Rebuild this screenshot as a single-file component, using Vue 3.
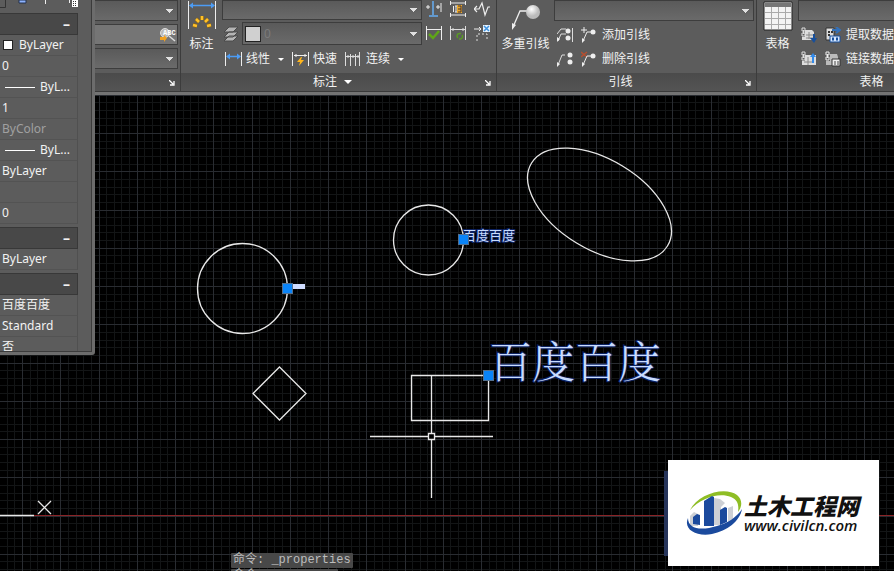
<script setup>
import { ref } from 'vue'

const properties = ref([
  { value: 'ByLayer', swatch: true },
  { value: '0' },
  { value: 'ByL...', line: true },
  { value: '1' },
  { value: 'ByColor', muted: true },
  { value: 'ByL...', line: true },
  { value: 'ByLayer' },
  { value: '' },
  { value: '0' }
])
const textProperties = ref(['百度百度', 'Standard', '否'])

// Grid spacing in screen pixels, five minor cells per major cell
const minor = 7.65
const count = 300
const columns = Array.from({ length: count }, (_, i) => ({
  at: Math.round(22 + (i - 5) * minor) + 0.5,
  major: i % 5 === 0
}))
const rows = Array.from({ length: count }, (_, i) => ({
  at: Math.round(38 + (i - 5) * minor) + 0.5,
  major: i % 5 === 0
}))

function gridPath(lines, major, vertical) {
  return lines
    .filter((l) => l.major === major)
    .map((l) => (vertical ? `M${l.at} 0V2000` : `M0 ${l.at}H2400`))
    .join('')
}
const minorPath = gridPath(columns, false, true) + gridPath(rows, false, false)
const majorPath = gridPath(columns, true, true) + gridPath(rows, true, false)
</script>

<template>
  <div class="cad">
    <header class="ribbon">
      <section class="group group-text">
        <div class="group-body stack">
          <select class="combo" aria-label="文字样式"></select>
          <div class="find">
            <input type="text" aria-label="查找文字" />
            <svg width="18" height="16" viewBox="0 0 18 16">
              <circle cx="6" cy="6" r="4.500" fill="#bbb" stroke="#ddd" />
              <path d="M10 9l6 5" stroke="#ddd" stroke-width="1.500" />
              <path d="M1 10h4v-2l3 3-3 4v-2H1z" fill="#f0a020" />
              <text x="4" y="8" class="abc">ABC</text>
            </svg>
          </div>
          <select class="combo" aria-label="文字高度"></select>
        </div>
        <footer class="title">
          <button class="launcher" aria-label="文字设置">
            <svg width="6" height="6" viewBox="0 0 6 6"><path d="M0 0l4 4M5 1v4H1" /></svg>
          </button>
        </footer>
      </section>

      <section class="group group-dim">
        <div class="group-body">
          <button class="big">
            <svg width="28" height="31" viewBox="0 0 28 31">
              <path d="M.5 1v28M27.500 1v28" stroke="#eee" />
              <path d="M3 5.500h22" stroke="#4c9cf5" stroke-width="1.500" />
              <path d="M1 5.500l4-3v6zM27 5.500l-4-3v6z" fill="#4c9cf5" />
              <path d="M5 25l4 1M8 19l3 3M14 16v4M20 19l-3 3M23 25l-4 1" stroke="#8b6414" stroke-width="4" />
              <path d="M5 25l4 1M8 19l3 3M14 16v4M20 19l-3 3M23 25l-4 1" stroke="#ffc12a" stroke-width="2.500" />
            </svg>
            <span>标注</span>
          </button>
          <div class="middle">
            <select class="combo" aria-label="标注样式"></select>
            <div class="layer">
              <svg width="16" height="16" viewBox="0 0 16 16">
                <path d="M6 10h9l-5 5H1zM6 6h9l-5 5H1zM6 1h9l-5 5H1z" fill="#b5b5b5" stroke="#4a4a4a" />
              </svg>
              <div class="layer-box">
                <i class="layer-swatch"></i>
                <select class="combo" aria-label="标注图层"><option>0</option></select>
              </div>
            </div>
            <div class="tools">
              <button>
                <svg width="17" height="16" viewBox="0 0 17 16">
                  <path d="M.5 1v14M16.500 1v14" stroke="#eee" />
                  <path d="M4 5.500h9" stroke="#4c9cf5" stroke-width="1.500" />
                  <path d="M1 5.500l4-3v6zM16 5.500l-4-3v6z" fill="#4c9cf5" />
                </svg>
                <span>线性</span><i class="caret small"></i>
              </button>
              <button>
                <svg width="17" height="16" viewBox="0 0 17 16">
                  <path d="M.5 1v14M16.500 1v14M2 4.500h13M4 3v3M13 3v3" stroke="#eee" />
                  <path d="M9 6l-4 5h3l-1 4 5-6H9l1-3z" fill="#ffb51c" />
                </svg>
                <span>快速</span>
              </button>
              <button>
                <svg width="17" height="16" viewBox="0 0 17 16">
                  <path d="M.5 1v14M14.500 1v14M5.500 3v12M10.500 3v12M1 5.500h14M3 4v3M8 4v3M13 4v3" stroke="#ddd" />
                </svg>
                <span>连续</span><i class="caret small"></i>
              </button>
            </div>
          </div>
          <div class="icon-grid">
            <button aria-label="打断">
              <svg width="16" height="16" viewBox="0 0 16 16">
                <path d="M0 6h4M10 6h4M15 2v9M2 4v4M12 4v4" stroke="#eee" fill="none" />
                <path d="M7 0v14M3 15h9" stroke="#65adf2" stroke-width="1.500" />
              </svg>
            </button>
            <button aria-label="检验">
              <svg width="16" height="16" viewBox="0 0 16 16">
                <path d="M.5 0v4M15.500 0v4M1 2h14M.5 12v4M15.500 12v4M1 14h14M3.500 5v6" stroke="#eee" />
                <path d="M7 4h5v8H7z" fill="#eea927" />
                <path d="M5 5h2M6 5v6M5 11h2" stroke="#eee" fill="none" />
                <path d="M8 5h3v6H8M8 8h3" stroke="#433" fill="none" />
              </svg>
            </button>
            <button aria-label="折弯标注">
              <svg width="16" height="16" viewBox="0 0 16 16">
                <path d="M0 8h5l3-6 3 12 3-8h2M3 5L0 8l3 3" stroke="#eee" stroke-width="1.200" fill="none" />
              </svg>
            </button>
            <button aria-label="更新">
              <svg width="16" height="16" viewBox="0 0 16 16">
                <path d="M.5 1v14M15.500 1v14M1 4.500h14" stroke="#eee" />
                <path d="M3 9l4 4 6-7" stroke="#5fa617" stroke-width="2.500" fill="none" />
              </svg>
            </button>
            <button aria-label="重新关联">
              <svg width="16" height="16" viewBox="0 0 16 16">
                <path d="M.5 1v14M15.500 1v14M1 4.500h14M3 3v3M13 3v3" stroke="#ddd" />
                <path d="M11 8.500H9.500A2.500 2.500 0 0 0 8 13M9 14h1.500A2.500 2.500 0 0 0 12 10" stroke="#5b9b24" stroke-width="1.500" fill="none" />
              </svg>
            </button>
            <button aria-label="倾斜">
              <svg width="16" height="16" viewBox="0 0 16 16">
                <path d="M0 4h7M5 2l2 2-2 2" stroke="#eee" fill="none" />
                <path d="M9 0h7v7H9z" fill="#e7f3ff" />
                <path d="M10 1l5 5M15 1l-5 5" stroke="#3b91df" stroke-width="1.500" />
                <path d="M3 16V9h10v7" stroke="#ddd" stroke-dasharray="2 2" fill="none" />
              </svg>
            </button>
          </div>
        </div>
        <footer class="title">
          <span>标注</span><i class="caret"></i>
          <button class="launcher" aria-label="标注设置">
            <svg width="6" height="6" viewBox="0 0 6 6"><path d="M0 0l4 4M5 1v4H1" /></svg>
          </button>
        </footer>
      </section>

      <section class="group group-leader">
        <div class="group-body">
          <button class="big">
            <svg width="30" height="31" viewBox="0 0 30 31">
              <defs>
                <radialGradient id="ball" cx=".4" cy=".3">
                  <stop offset="0" stop-color="#fff" />
                  <stop offset="1" stop-color="#bbb" />
                </radialGradient>
              </defs>
              <path d="M2 27L9 11h7" stroke="#eee" stroke-width="1.300" fill="none" />
              <path d="M1 30v-7l4 2z" fill="#eee" />
              <circle cx="22" cy="12" r="7" fill="url(#ball)" />
            </svg>
            <span>多重引线</span>
          </button>
          <div class="side">
            <select class="combo" aria-label="引线样式"></select>
            <div class="tools">
              <button aria-label="对齐">
                <svg width="16" height="16" viewBox="0 0 16 16">
                  <path d="M1 14l3-7h5M0 7l4-5h5M15.500 1v14" stroke="#ddd" fill="none" />
                  <path d="M0 15v-5l3 2z" fill="#eee" />
                  <circle cx="11" cy="4" r="2.500" fill="#eee" /><circle cx="11" cy="11" r="2.500" fill="#eee" />
                </svg>
              </button>
              <button>
                <svg width="16" height="16" viewBox="0 0 16 16">
                  <path d="M2 14L6 5h4M0 3h6M3 0v6" stroke="#eee" fill="none" />
                  <path d="M1 16v-5l3 2z" fill="#eee" />
                  <circle cx="12" cy="5" r="2.500" fill="#eee" />
                </svg>
                <span>添加引线</span>
              </button>
            </div>
            <div class="tools">
              <button aria-label="合并">
                <svg width="16" height="16" viewBox="0 0 16 16">
                  <path d="M1 14L5 4h3" stroke="#ddd" fill="none" />
                  <path d="M0 16v-5l3 2z" fill="#eee" />
                  <circle cx="13" cy="4" r="2.500" fill="#eee" /><circle cx="13" cy="11" r="2.500" fill="#eee" />
                </svg>
              </button>
              <button>
                <svg width="16" height="16" viewBox="0 0 16 16">
                  <path d="M0 1l6 5M6 1L0 6" stroke="#b64f30" stroke-width="1.500" />
                  <path d="M2 14L6 5h4" stroke="#eee" fill="none" />
                  <path d="M1 16v-5l3 2z" fill="#eee" />
                  <circle cx="12" cy="5" r="2.500" fill="#eee" />
                </svg>
                <span>删除引线</span>
              </button>
            </div>
          </div>
        </div>
        <footer class="title">
          <span>引线</span>
          <button class="launcher" aria-label="引线设置">
            <svg width="6" height="6" viewBox="0 0 6 6"><path d="M0 0l4 4M5 1v4H1" /></svg>
          </button>
        </footer>
      </section>

      <section class="group group-table">
        <div class="group-body">
          <button class="big">
            <svg width="30" height="31" viewBox="0 0 30 31">
              <path d="M1 2h28v28H1z" fill="#f3f3f3" stroke="#222" />
              <path d="M2 3h26v4H2z" fill="#777" />
              <path d="M8.500 7v22M15.500 7v22M22.500 7v22M2 12.500h26M2 18.500h26M2 24.500h26" stroke="#aaa" />
            </svg>
            <span>表格</span>
          </button>
          <div class="side">
            <select class="combo" aria-label="表格样式"></select>
            <div class="tools">
              <button aria-label="从源下载">
                <svg width="16" height="16" viewBox="0 0 16 16">
                  <path d="M4 3h7l2 2v8H1v-3h3z" fill="#ddd" />
                  <path d="M5 8h7M5 11h7M8 5v7" stroke="#888" />
                  <path d="M1 1h3v3H1zM1 6h3v3H1zM2.500 3v4" stroke="#ddd" fill="none" />
                  <path d="M13 7v5" stroke="#174f9b" stroke-width="2" />
                  <path d="M9 11h7l-3 5z" fill="#174f9b" />
                </svg>
              </button>
              <button>
                <svg width="16" height="16" viewBox="0 0 16 16">
                  <path d="M1 1h8v12H1z" fill="#ddd" stroke="#333" />
                  <path d="M3 5h2M3 8h2M6 5h2" stroke="#333" stroke-width="2" />
                  <path d="M7 3h7M11 0l4 3-4 3" stroke="#3371ba" stroke-width="2" fill="none" />
                  <path d="M5 9h10v6H5z" fill="#d5e7ff" stroke="#174f9b" />
                  <path d="M7 12h2M11 12h2" stroke="#174f9b" stroke-width="3" />
                </svg>
                <span>提取数据</span>
              </button>
            </div>
            <div class="tools">
              <button aria-label="上载到源">
                <svg width="16" height="16" viewBox="0 0 16 16">
                  <path d="M4 4h11v10H1v-4h3z" fill="#ddd" />
                  <path d="M3 11h9M7 6v8" stroke="#888" />
                  <path d="M1 1h3v3H1zM1 6h3v3H1zM2.500 3v4" stroke="#ddd" fill="none" />
                  <path d="M12 12V5" stroke="#348bea" stroke-width="2" />
                  <path d="M9 6h6l-3-4z" fill="#348bea" />
                </svg>
              </button>
              <button>
                <svg width="16" height="16" viewBox="0 0 16 16">
                  <path d="M5 3h7l1 3v3H7v5H1v-4h4z" fill="#bbb" />
                  <path d="M1 1h3v3H1zM1 6h3v3H1zM2.500 3v4" stroke="#eee" fill="none" />
                  <path d="M7 8h8v7H7z" fill="#eee" stroke="#333" />
                  <path d="M9 11h2M12 11h2M9 13h2M12 13h2" stroke="#444" />
                </svg>
                <span>链接数据</span>
              </button>
            </div>
          </div>
        </div>
        <footer class="title"><span>表格</span></footer>
      </section>
    </header>

    <main class="model">
      <svg class="drawing" width="100%" height="100%">
        <path class="minor" :d="minorPath" />
        <path class="major" :d="majorPath" />
        <path class="axis" d="M34 420.500H2400" />
        <path d="M0 420.500H34M38 406l13 13M51 406l-13 13" class="shape" />

        <circle class="shape" cx="242.500" cy="193.500" r="45" />
        <circle class="shape" cx="428.500" cy="145" r="35" />
        <ellipse class="shape" cx="599.500" cy="109.500" rx="79.600" ry="44.800" transform="rotate(31.400 599.500 109.500)" />
        <path class="shape" d="M279.500 272l26.500 26.500-26.500 26.500-26.500-26.500z" />
        <path class="shape" d="M411.500 280.500h77v45h-77z" />

        <text class="note" x="463" y="145">百度百度</text>
        <text class="note large" x="489" y="283">百度百度</text>
        <path d="M293 189h12v5h-12z" fill="#cfdcff" />

        <rect class="grip" x="282.500" y="188.500" width="10" height="10" />
        <rect class="grip" x="458.500" y="139.500" width="10" height="10" />
        <rect class="grip" x="483.500" y="275.500" width="10" height="10" />

        <path class="shape" d="M370 341.500h58M435 341.500h58M431.500 281v57M431.500 345v58M428.500 338.500h6v6h-6z" />
      </svg>

      <div class="command">
        <p>命令: _properties</p>
        <p class="next">命令:</p>
      </div>

      <div class="watermark">
        <svg width="58" height="48" viewBox="0 0 58 48">
          <path d="M4 21C12 5 39-3 51 6c6 5 5 12 1 17 1-7 0-12-7-15C33 3 15 9 4 21z" fill="#8fbe25" />
          <path d="M4 27l4-4 4 2v12H4zM28 9l6 1 5 4-4 4v18h-7zM42 19l5-2v14l-5 3z" fill="#cdd0d5" />
          <path d="M7 28l4-3 3 1v10l-7-1zM18 12l8-5 2 1v29H18zM34 21l5-3 2 1v14l-7 3z" fill="#1b4a9d" />
          <path d="M2 29c0 11 13 13 29 8 11-3 20-9 25-17-2 12-15 22-30 25C10 48-3 40 2 29z" fill="#1b4a9d" />
        </svg>
        <div class="brand">
          <strong>土木工程网</strong>
          <span>www.civilcn.com</span>
        </div>
      </div>
    </main>

    <aside class="palette">
      <div class="palette-tools">
        <svg width="80" height="9" viewBox="0 0 80 9">
          <path d="M0 7.500h5.500V0" stroke="#333" fill="none" />
          <path d="M19 0h7v3h-7z" fill="#8db3ff" stroke="#23304d" />
          <path d="M45.500 0v4M69.500 0v3" stroke="#eee" />
          <path d="M72 0h6v7h-6z" fill="#fff" />
          <path d="M73 1.500h4M73 3.500h4M73 5.500h4" stroke="#333" stroke-dasharray="1 1" />
        </svg>
      </div>
      <div class="palette-list">
        <h2><button aria-label="常规">–</button></h2>
        <ul>
          <li v-for="(item, i) in properties" :key="i" :class="{ muted: item.muted }">
            <i v-if="item.swatch" class="swatch"></i>
            <i v-if="item.line" class="sample"></i>
            {{ item.value }}
          </li>
        </ul>
        <h2><button aria-label="三维效果">–</button></h2>
        <ul>
          <li>ByLayer</li>
        </ul>
        <h2><button aria-label="文字">–</button></h2>
        <ul>
          <li v-for="value in textProperties" :key="value">{{ value }}</li>
        </ul>
      </div>
    </aside>
  </div>
</template>

<style>
body {
  margin: 0;
  background: #000;
  overflow: hidden;
}
</style>

<style scoped>
.cad {
  position: relative;
  display: flex;
  flex-direction: column;
  height: 100vh;
  overflow: hidden;
  color: #f2f2f2;
  font-family: "Noto Sans", "Noto Sans CJK SC", sans-serif;
  font-size: 12px;
  line-height: 16px;
}
button,
input,
select {
  box-sizing: border-box;
  margin: 0;
  padding: 0;
  border: 0;
  background: none;
  color: inherit;
  font: inherit;
}
svg {
  display: block;
  flex: none;
}

/* Ribbon */
.ribbon {
  display: flex;
  flex: none;
  overflow: hidden;
  background: #5c5c5c;
  border-bottom: 3px solid #737373;
}
.group {
  box-sizing: border-box;
  display: flex;
  flex-direction: column;
  flex: none;
  border-right: 1px solid #3c3c3c;
  border-bottom: 1px solid #393939;
}
.group-text {
  width: 181px;
  padding-left: 94px;
}
.group-dim {
  width: 316px;
}
.group-leader {
  width: 260px;
}
.group-table {
  flex: 1 0 242px;
}
.group-body {
  display: flex;
  height: 73px;
}
.title {
  position: relative;
  display: flex;
  align-items: center;
  justify-content: center;
  gap: 7px;
  height: 18px;
  padding-right: 12px;
  background: linear-gradient(#4b4b4b, #545454);
}
.launcher {
  position: absolute;
  right: 5px;
  top: 7px;
}
.launcher path {
  stroke: #fff;
  stroke-width: 1.3;
  fill: none;
}
.combo {
  appearance: none;
  display: block;
  width: 100%;
  height: 21px;
  border: 1px solid #3d3d3d;
  border-radius: 0;
  background:
    linear-gradient(to bottom left, #e0e0e0 50%, transparent 50%) right 7px center / 4px 4px no-repeat,
    linear-gradient(to bottom right, #e0e0e0 50%, transparent 50%) right 3px center / 4px 4px no-repeat,
    linear-gradient(#5a5a5a, #6a6a6a);
}
.stack {
  flex-direction: column;
  gap: 3px;
  padding-right: 2px;
}
.find {
  display: flex;
  align-items: center;
  box-sizing: border-box;
  height: 21px;
  border: 1px solid #3d3d3d;
  background: #757575;
}
.find input {
  flex: 1;
  min-width: 0;
}
.abc {
  font: bold 7px "Liberation Mono", monospace;
  fill: #fff;
}
.big {
  display: flex;
  flex-direction: column;
  align-items: center;
  gap: 5px;
  width: 41px;
  height: 56px;
}
.big span {
  white-space: nowrap;
}
.middle {
  display: flex;
  flex-direction: column;
  gap: 2px;
  width: 200px;
}
.middle > .combo {
  height: 20px;
}
.layer {
  display: flex;
  align-items: center;
  gap: 3px;
  padding-left: 1px;
}
.layer-box {
  display: flex;
  align-items: center;
  flex: 1;
  border: 1px solid #3d3d3d;
  background: linear-gradient(#5a5a5a, #6a6a6a);
}
.layer-box .combo {
  flex: 1;
  height: 21px;
  padding-left: 3px;
  border: 0;
  color: #7b7b7b;
}
.layer-swatch {
  width: 14px;
  height: 14px;
  margin-left: 2px;
  border: 1px solid #222;
  background: #d0d0d0;
}
.tools {
  display: flex;
  align-items: center;
  gap: 8px;
  height: 24px;
}
.tools button {
  display: flex;
  align-items: center;
  gap: 5px;
  white-space: nowrap;
}
.middle .tools {
  padding-left: 3px;
}
.middle .tools button {
  gap: 4px;
}
.caret {
  border: 4px solid transparent;
  border-top-color: #fff;
  border-bottom: 0;
}
.caret.small {
  border-width: 3px;
  border-bottom: 0;
  margin-left: 4px;
}
.icon-grid {
  display: grid;
  grid-template-columns: repeat(3, 24px);
  grid-auto-rows: 24px;
  height: 48px;
  padding-top: 1px;
}
.icon-grid button {
  display: flex;
  justify-content: center;
  align-items: flex-start;
}
.side {
  flex: 1;
  min-width: 0;
  padding-right: 2px;
}
.side .combo {
  margin-bottom: 2px;
}
.side .tools {
  padding-left: 3px;
}
.group-leader .big {
  width: 57px;
}

/* Drawing area */
.model {
  position: relative;
  flex: 1;
  min-height: 0;
  overflow: hidden;
  background: #000;
}
.minor,
.major {
  fill: none;
  stroke: #131516;
}
.major {
  stroke: #292c31;
}
.axis {
  stroke: #8a2326;
}
.shape {
  fill: none;
  stroke: #e8e8e8;
  stroke-width: 1.3;
}
.grip {
  fill: #0a84f8;
  stroke: #53708f;
}
.note {
  font: 13px "Noto Sans CJK SC", sans-serif;
  fill: #c9dcff;
  stroke: #0d2260;
  stroke-width: 2px;
  paint-order: stroke;
}
.note.large {
  font-family: "Noto Serif CJK SC", "Noto Sans CJK SC", serif;
  font-size: 43px;
  font-weight: 300;
}
.command {
  position: absolute;
  left: 231px;
  bottom: -13px;
  display: flex;
  flex-direction: column;
  align-items: flex-start;
  gap: 1px;
  font: 12px/15px "Liberation Mono", "Noto Sans CJK SC", monospace;
  color: #bdbdbd;
}
.command p {
  margin: 0;
  padding: 0 2px;
  border-radius: 1px;
  background: #484848;
}
.command .next {
  min-width: 103px;
}
.watermark {
  position: absolute;
  right: 15px;
  bottom: 5px;
  box-sizing: border-box;
  display: flex;
  align-items: center;
  width: 211px;
  height: 106px;
  padding-left: 18px;
  background: #fff;
  color: #111;
}
.watermark::before {
  content: "";
  position: absolute;
  left: -4px;
  top: 11px;
  width: 4px;
  height: 85px;
  background: #26345a;
}
.brand {
  display: flex;
  flex-direction: column;
  white-space: nowrap;
}
.brand strong {
  font: italic 900 23px/24px "Noto Sans CJK SC", sans-serif;
}
.brand span {
  font: italic 600 15px/16px "Open Sans", sans-serif;
}

/* Properties palette */
.palette {
  position: absolute;
  left: 0;
  top: 0;
  box-sizing: border-box;
  width: 95px;
  height: 355px;
  padding-right: 3px;
  padding-bottom: 3px;
  border-radius: 0 0 3px 0;
  background: #6c6c6c;
}
.palette-tools {
  height: 13px;
  border-right: 1px solid #3b3b3b;
  background: #5c5c5c;
}
.palette-list {
  box-sizing: border-box;
  height: 339px;
  overflow: hidden;
  padding-right: 13px;
  border-right: 1px solid #3b3b3b;
  border-bottom: 1px solid #3b3b3b;
  background: #5c5c5c;
}
.palette h2 {
  box-sizing: border-box;
  display: flex;
  justify-content: flex-end;
  height: 22px;
  margin: 0;
  padding-right: 7px;
  border: 1px solid #383838;
  border-left: 0;
  background: #484848;
  font-size: 14px;
}
.palette ul {
  margin: 0 0 3px;
  padding: 0;
  list-style: none;
}
.palette li {
  box-sizing: border-box;
  display: flex;
  align-items: center;
  height: 21px;
  padding-left: 2px;
  border-right: 1px solid #505050;
  border-bottom: 1px solid #535353;
  line-height: 18px;
  white-space: nowrap;
}
.palette .muted {
  color: #a0a0a0;
}
.swatch {
  width: 8px;
  height: 8px;
  margin: 0 6px 0 1px;
  border: 1px solid #222;
  background: #fff;
}
.sample {
  width: 30px;
  height: 1px;
  margin: 0 5px 0 3px;
  background: #fff;
}
</style>
